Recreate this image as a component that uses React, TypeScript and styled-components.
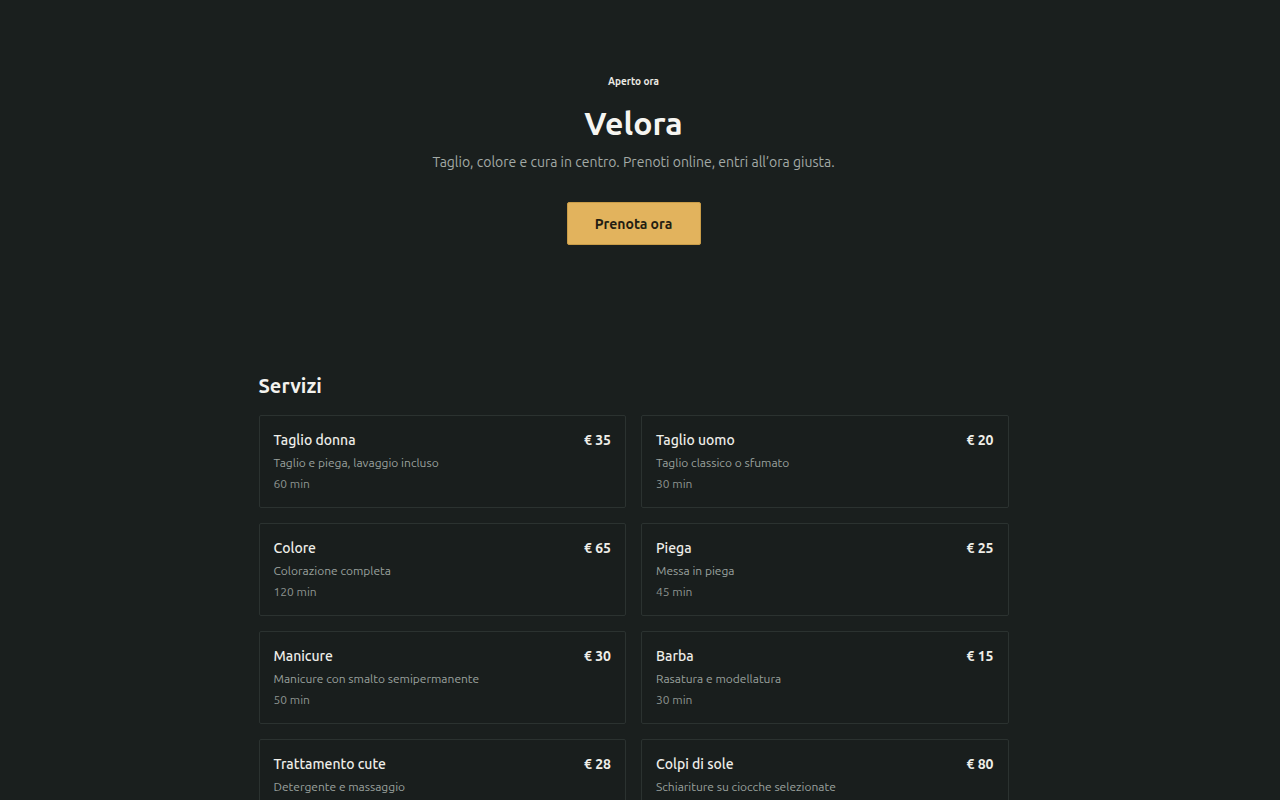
import React from "react";
import styled, { createGlobalStyle } from "styled-components";

interface Service {
  name: string;
  price: number;
  description: string;
  duration: number;
}

const services: Service[] = [
  { name: "Taglio donna", price: 35, description: "Taglio e piega, lavaggio incluso", duration: 60 },
  { name: "Taglio uomo", price: 20, description: "Taglio classico o sfumato", duration: 30 },
  { name: "Colore", price: 65, description: "Colorazione completa", duration: 120 },
  { name: "Piega", price: 25, description: "Messa in piega", duration: 45 },
  { name: "Manicure", price: 30, description: "Manicure con smalto semipermanente", duration: 50 },
  { name: "Barba", price: 15, description: "Rasatura e modellatura", duration: 30 },
  { name: "Trattamento cute", price: 28, description: "Detergente e massaggio", duration: 40 },
  { name: "Colpi di sole", price: 80, description: "Schiariture su ciocche selezionate", duration: 90 },
];

const App = (): JSX.Element => {
  return (
    <>
      <GlobalStyle />
      <Page>
        <Hero>
          <Status>Aperto ora</Status>
          <Title>Velora</Title>
          <Tagline>Taglio, colore e cura in centro. Prenoti online, entri all’ora giusta.</Tagline>
          <BookButton type="button">Prenota ora</BookButton>
        </Hero>
        <ServicesSection>
          <SectionTitle>Servizi</SectionTitle>
          <ServiceGrid>
            {services.map((service) => (
              <ServiceCard key={service.name}>
                <CardHeader>
                  <ServiceName>{service.name}</ServiceName>
                  <Price>€ {service.price}</Price>
                </CardHeader>
                <Description>{service.description}</Description>
                <Duration>{service.duration} min</Duration>
              </ServiceCard>
            ))}
          </ServiceGrid>
        </ServicesSection>
      </Page>
    </>
  );
};

const GlobalStyle = createGlobalStyle`
  html, body {
    margin: 0;
    padding: 0;
    background: #1a1f1e;
  }

  body {
    font-family: Ubuntu, "Noto Sans", "Open Sans", sans-serif;
    color: #f1f1ee;
    -webkit-font-smoothing: antialiased;
  }
`;

// the reference leaves room for a scrollbar on the right
const Page = styled.div`
  min-height: 100vh;
  padding-right: 13px;
  box-sizing: border-box;
  background: #1a1f1e;
`;

// HERO

const Hero = styled.header`
  display: flex;
  flex-direction: column;
  align-items: center;
  padding: 75px 24px 0 24px;
  text-align: center;
`;

const Status = styled.span`
  font-size: 10px;
  font-weight: 700;
  color: #eceae4;
  line-height: 14px;
`;

const Title = styled.h1`
  margin: 14px 0 0 0;
  font-size: 32px;
  font-weight: 700;
  line-height: 40px;
  color: #f6f5f1;
`;

const Tagline = styled.p`
  margin: 9px 0 0 0;
  font-size: 14px;
  line-height: 20px;
  color: #a3aaa6;
`;

const BookButton = styled.button`
  margin-top: 30px;
  width: 134px;
  height: 43px;
  border: 1px solid #c99c48;
  border-radius: 2px;
  background: #e2b35d;
  color: #231d12;
  font-family: inherit;
  font-size: 14px;
  font-weight: 600;
  cursor: pointer;

  :hover {
    background: #e9bd6a;
  }
`;

// SERVICES

const ServicesSection = styled.section`
  width: 750px;
  margin: 0 auto;
  padding-top: 128px;
`;

const SectionTitle = styled.h2`
  margin: 0 0 16px 0;
  font-size: 20px;
  font-weight: 700;
  line-height: 26px;
  color: #f3f2ee;
`;

const ServiceGrid = styled.div`
  display: grid;
  grid-template-columns: 1fr 1fr;
  gap: 15px;
`;

const ServiceCard = styled.article`
  display: flex;
  flex-direction: column;
  height: 93px;
  box-sizing: border-box;
  padding: 14px 14px;
  border: 1px solid #2b3230;
  border-radius: 2px;
  background: #191e1d;
`;

const CardHeader = styled.div`
  display: flex;
  justify-content: space-between;
  align-items: baseline;
`;

const ServiceName = styled.h3`
  margin: 0;
  font-size: 14px;
  font-weight: 500;
  line-height: 20px;
  color: #efeee9;
`;

const Price = styled.span`
  font-size: 14px;
  font-weight: 700;
  line-height: 20px;
  color: #efeee9;
`;

const Description = styled.p`
  margin: 4px 0 0 0;
  font-size: 12px;
  line-height: 18px;
  color: #9aa19d;
`;

const Duration = styled.span`
  margin-top: 3px;
  font-size: 12px;
  line-height: 18px;
  color: #8d9490;
`;

export default App;
